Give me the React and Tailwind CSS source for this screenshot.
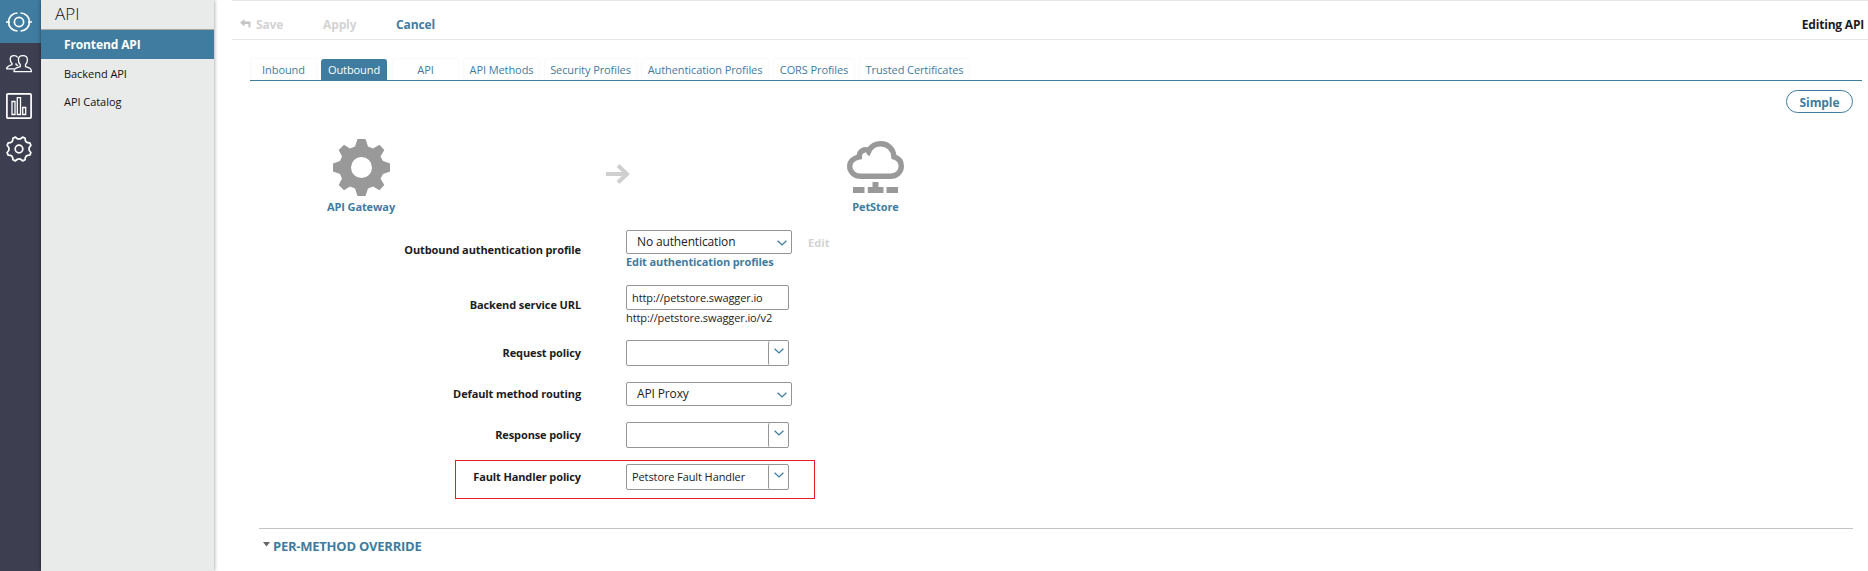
import React from "react";

const tabs = [
  { label: "Inbound", box: "w-[67px]" },
  { label: "Outbound", box: "w-[66px] mr-px", active: true },
  { label: "API", box: "w-[67px]" },
  { label: "API Methods", box: "w-[77px]" },
  { label: "Security Profiles", box: "w-[93px]" },
  { label: "Authentication Profiles", box: "w-[128px]" },
  { label: "CORS Profiles", box: "w-[82px]" },
  { label: "Trusted Certificates", box: "w-[111px]" },
];

function TargetIcon() {
  return (
    <svg width="26" height="22" viewBox="0 0 26 22" fill="none" stroke="#fff" strokeWidth="1.7">
      <circle cx="13" cy="11" r="4.6" />
      <path d="M11.500 2A9 9 0 0 0 11.500 20M14.500 2A9 9 0 0 1 14.500 20M0 11H4M22 11H26" />
    </svg>
  );
}

function PeopleIcon() {
  return (
    <svg width="26" height="18" viewBox="0 0 26 18" fill="none" stroke="#fff" strokeWidth="1.3" strokeLinejoin="round">
      <path d="M8 16.600H25.400C25.400 13.800 24.200 13 19.500 11.600V9.700C21 8.400 21.400 7 21.400 4.800C21.400 2.200 19.600 .7 16.900 .7S12.400 2.200 12.400 4.800C12.400 7 12.800 8.400 14.300 9.700V11.600C9.600 13 8 13.800 8 16.600Z" />
      <path d="M8.200 13.800H.6C.6 11.700 1.800 11 6 9.600V8.400C4.700 7.200 4.200 6 4.200 4.300C4.200 2 5.700 .7 8 .7C9.800 .7 11 1.300 11.700 2.500M10 8.300V9.600L12 10.600" />
    </svg>
  );
}

function ChartIcon() {
  return (
    <svg width="26" height="26" viewBox="0 0 26 26" fill="none" stroke="#fff">
      <rect x=".9" y=".9" width="24.2" height="24.2" rx="1" strokeWidth="1.7" />
      <path d="M6 8.500H9V21.500H6ZM11.300 4.600H14.500V21.500H11.300ZM16.700 14.500H19.700V21.500H16.700Z" strokeWidth="1.3" />
    </svg>
  );
}

function GearOutlineIcon() {
  return (
    <svg width="26" height="26" viewBox="-13 -13 26 26" fill="none" stroke="#fff" strokeWidth="1.7" strokeLinejoin="round">
      <circle r="3.8" />
      <path d="M11.900 3.600L10.800 6.100Q5.900 5.900 6.100 10.800L3.600 11.900Q0 8 -3.600 11.900L-6.100 10.800Q-5.900 5.900 -10.800 6.100L-11.900 3.600Q-8 0 -11.900 -3.600L-10.800 -6.100Q-5.900 -5.900 -6.100 -10.800L-3.600 -11.900Q0 -8 3.600 -11.900L6.100 -10.800Q5.900 -5.900 10.800 -6.100L11.900 -3.600Q8 0 11.900 3.600Z" />
    </svg>
  );
}

function GatewayIcon() {
  return (
    <svg width="57" height="57" viewBox="0 0 57 57" fill="#999">
      <path
        fillRule="evenodd"
        d="M24.500 0H32.500L35 7.500L40 9.500L46.500 5.700L51.300 11L47.500 17.500L50 22L57 24.500V32.500L50 35L47.500 39.500L51.300 46L46.500 51.300L40 47.500L35 49.500L32.500 57H24.500L22 49.500L17 47.500L11 51.300L5.700 46L9 39.500L7 35L0 32.500V24.500L7 22L9 17.500L5.700 11L11 5.700L17 9.500L22 7.500ZM28.500 18A10.500 10.500 0 1 0 28.500 39A10.500 10.500 0 1 0 28.500 18Z"
      />
    </svg>
  );
}

function CloudIcon() {
  return (
    <svg width="57" height="52" viewBox="0 0 57 52">
      <path
        d="M14 35.300H43.500C49.500 35.300 54.300 31 54.300 25.300C54.300 20.500 51.300 17 47 15.800C46.500 8 41 2.700 33.800 2.700C28.500 2.700 24.300 5.300 22 9.500C17.500 7.200 12.300 10.200 12.300 15.200V15.900C6.500 17 2.700 20.500 2.700 25.300C2.700 31 7.500 35.300 14 35.300Z"
        fill="none"
        stroke="#999"
        strokeWidth="5.4"
      />
      <path d="M20.500 9L24.500 11Q23 12.800 22.600 15.200L19.500 13Z" fill="#999" />
      <path d="M6 46H17.500V52H6ZM20.800 46H25.500V41H31.500V46H36.500V52H20.800ZM39.500 46H51V52H39.500Z" fill="#999" />
    </svg>
  );
}

function Chevron() {
  return (
    <svg width="10" height="6" viewBox="0 0 10 6" fill="none" stroke="#3f7ca0" strokeWidth="1.3">
      <path d="M.6 .7L5 4.900L9.400 .7" />
    </svg>
  );
}

function Select({ children }) {
  return (
    <div className="flex h-6 w-[166px] items-center justify-between rounded-[2px] border border-[#959595] pl-[10px] pr-[4px] text-[12px] tracking-[-0.14px] text-[#222]">
      <span>{children}</span>
      <span className="mt-[2px]"><Chevron /></span>
    </div>
  );
}

function Combo({ children }) {
  return (
    <div className="flex h-[26px] w-[163px] rounded-[2px] border border-[#959595] text-[11px] tracking-[-0.1px] text-[#222]">
      <div className="flex flex-1 items-center pl-[5px]">{children}</div>
      <div className="flex w-[20px] justify-center rounded-l-[2px] border-l border-[#959595] pt-[7px]"><Chevron /></div>
    </div>
  );
}

function Row({ label, className, labelClass = "", children }) {
  return (
    <div className={"flex items-start " + className}>
      <div className={"w-[367px] text-right text-[11px] font-bold leading-4 tracking-[-0.11px] text-[#1c1c24] " + labelClass}>{label}</div>
      <div className="ml-[45px]">{children}</div>
    </div>
  );
}

export default function App() {
  return (
    <div className="flex h-[571px] w-[1868px] overflow-hidden whitespace-nowrap bg-white font-['Open_Sans',sans-serif]">
      <nav className="flex w-[41px] shrink-0 flex-col bg-[#3d3f50]">
        <div className="flex h-[43px] items-center bg-[#3f7ca0] pl-[6px]"><TargetIcon /></div>
        <div className="pl-[6px] pt-[12px]"><PeopleIcon /></div>
        <div className="pl-[6px] pt-[20px]"><ChartIcon /></div>
        <div className="pl-[6px] pt-[17px]"><GearOutlineIcon /></div>
      </nav>

      <aside className="z-10 w-[173px] shrink-0 bg-[#e8ebea] text-[#111] shadow-[0_0_4px_rgba(0,0,0,0.45)]">
        <div className="flex h-[30px] items-center border-b border-[#aaa89f] pb-px pl-[14px] text-[17px] font-light">API</div>
        <div className="flex h-[29px] items-center bg-[#3f7ca0] pl-[23px] pt-px text-[12px] font-bold tracking-[-0.12px] text-white">Frontend API</div>
        <div className="flex h-[29px] items-center pl-[23px] pt-[2px] text-[11px] tracking-[-0.05px]">Backend API</div>
        <div className="flex h-[28px] items-center pl-[23px] text-[11px] tracking-[-0.05px]">API Catalog</div>
      </aside>

      <main className="min-w-0 flex-1">
        <header className="ml-[18px] flex h-10 items-center border-y border-[#e6e6e6] pt-[10px] text-[12px] font-bold tracking-[-0.12px] text-[#d3d3d3]">
          <svg className="-mt-1 ml-2" width="11" height="9" viewBox="0 0 11 9" fill="#c4c4c4">
            <path d="M4.500 0L0 3.700L4.500 7.400V4.900H8.500V8.500H10.500V2.500H4.500Z" />
          </svg>
          <span className="ml-[5px] w-[67px]">Save</span>
          <span className="w-[73px]">Apply</span>
          <span className="text-[#3f7ca0]">Cancel</span>
          <span className="ml-auto pr-[4px] tracking-[-0.2px] text-[#1c1c24]">Editing API</span>
        </header>

        <div className="ml-9 mr-[6px] mt-[18px] flex h-[23px] items-end gap-1 border-b border-[#3f7ca0] text-[11px] tracking-[-0.09px] text-[#3f7ca0]">
          {tabs.map((t) => (
            <div
              key={t.label}
              className={
                t.box +
                " flex shrink-0 items-center justify-center rounded-t-[3px] border border-b-0 " +
                (t.active ? "h-[21px] border-[#3f7ca0] bg-[#3f7ca0] pt-px text-white" : "h-[22px] border-[#fafafa] pt-[2px]")
              }
            >
              {t.label}
            </div>
          ))}
        </div>

        <div className="mr-[15px] mt-[9px] flex justify-end">
          <div className="flex h-[23px] w-[67px] items-center justify-center rounded-full border border-[#3f7ca0] pt-[2px] text-[12px] font-bold tracking-[-0.1px] text-[#3f7ca0]">Simple</div>
        </div>

        <div className="mt-[26px] flex h-[79px] text-[11px] font-bold tracking-[-0.1px] text-[#3f7ca0]">
          <div className="ml-[107px] flex w-20 flex-col items-center">
            <GatewayIcon />
            <span className="mt-[3px] leading-4">API Gateway</span>
          </div>
          <svg className="ml-[205px] mt-[25px]" width="24" height="20" viewBox="0 0 24 20" fill="none" stroke="#cfcfcf" strokeWidth="4">
            <path d="M0 10H21M12 1.500L21 10L12 18.500" />
          </svg>
          <div className="ml-[205px] flex w-20 flex-col items-center pt-[2px]">
            <CloudIcon />
            <span className="mt-[6px] pl-px leading-4">PetStore</span>
          </div>
        </div>

        <Row label="Outbound authentication profile" className="mt-[12px] h-[55px]" labelClass="mt-[12px]">
          <div className="flex items-center">
            <Select>No authentication</Select>
            <span className="ml-4 pt-[2px] text-[11px] font-bold tracking-[0.1px] text-[#d3d3d3]">Edit</span>
          </div>
          <div className="text-[11px] font-bold leading-4 tracking-[-0.12px] text-[#3f7ca0]">Edit authentication profiles</div>
        </Row>
        <Row label="Backend service URL" className="h-[55px]" labelClass="mt-[12px]">
          <div className="flex h-[25px] w-[163px] items-center rounded-[2px] border border-[#959595] pl-[5px] pt-[2px] text-[11px] tracking-[-0.1px] text-[#222]">http://petstore.swagger.io</div>
          <div className="text-[11px] leading-4 tracking-[-0.1px] text-[#222]">http://petstore.swagger.io/v2</div>
        </Row>
        <Row label="Request policy" className="h-[42px]" labelClass="mt-[5px]"><Combo /></Row>
        <Row label="Default method routing" className="h-[40px]" labelClass="mt-[4px]"><Select>API Proxy</Select></Row>
        <Row label="Response policy" className="h-[38px]" labelClass="mt-[5px]"><Combo /></Row>
        <div className="ml-[241px] h-[39px] w-[360px] border border-[#ed1c24] pt-[3px]">
          <div className="flex items-start">
            <div className="w-[125px] pt-[5px] text-right text-[11px] font-bold leading-4 tracking-[-0.13px] text-[#1c1c24]">Fault Handler policy</div>
            <div className="ml-[45px]"><Combo>Petstore Fault Handler</Combo></div>
          </div>
        </div>

        <section className="ml-[45px] mr-[15px] mt-[29px] flex items-start border-t border-[#c3c3c3] pt-[8px]">
          <svg className="ml-[4px] mt-[5px]" width="7" height="5" viewBox="0 0 7 5" fill="#666"><path d="M0 0H7L3.500 4.500Z" /></svg>
          <h2 className="ml-[3px] text-[13px] font-bold leading-[18px] tracking-[-0.24px] text-[#3f7ca0]">PER-METHOD OVERRIDE</h2>
        </section>
      </main>
    </div>
  );
}
